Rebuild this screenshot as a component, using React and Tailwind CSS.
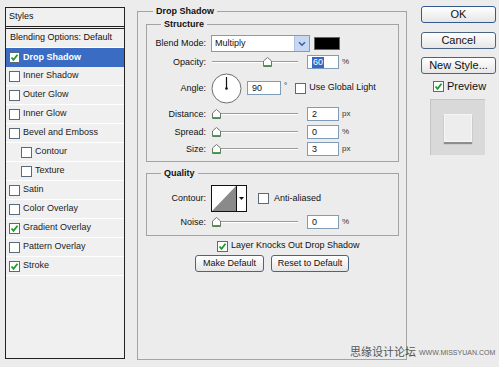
import React from 'react';

const font = { fontFamily: '"Liberation Sans", Arial, sans-serif' };

const Check = ({ checked }) => (
  <span className="w-[11px] h-[11px] border border-[#5a6a7a] bg-white flex items-center justify-center shrink-0">
    {checked && (
      <svg width="9" height="9" viewBox="0 0 9 9">
        <path d="M1.5 4.5 L3.5 6.8 L7.5 1.8" fill="none" stroke="#1f9a2a" strokeWidth="1.8" />
      </svg>
    )}
  </span>
);

const Thumb = () => (
  <svg width="9" height="10" viewBox="0 0 9 10">
    <path d="M0.5 4 L4.5 0.5 L8.5 4 V9.5 H0.5 Z" fill="#fff" stroke="#6b7a6b" />
    <path d="M1 8.8 H8" stroke="#2e9a3a" strokeWidth="1.4" />
  </svg>
);

const Slider = ({ pos }) => (
  <div className="relative w-[86px] h-[14px] flex items-center">
    <div className="w-full h-[2px] border-t border-[#9a9a9a] border-b border-b-white" />
    <div className="absolute top-[2px]" style={{ left: pos }}>
      <Thumb />
    </div>
  </div>
);

const Field = ({ value, selected, w = 'w-[32px]' }) => (
  <div className={`${w} h-[14px] bg-white border border-[#7f9db9] flex items-center pl-[4px] text-[9px] leading-none`}>
    {selected ? <span className="bg-[#316ac5] text-white px-[1px] py-[1px]">{value}</span> : value}
  </div>
);

const Label = ({ children }) => (
  <div className="w-[60px] text-right text-[9px] leading-none pr-[1px] whitespace-nowrap">{children}</div>
);

const SliderRow = ({ label, pos, value, unit, selected, className = '' }) => (
  <div className={`flex items-center h-[14px] ${className}`}>
    <Label>{label}</Label>
    <div className="ml-[5px]">
      <Slider pos={pos} />
    </div>
    <div className="ml-[9px]">
      <Field value={value} selected={selected} />
    </div>
    <span className="ml-[3px] text-[8px] text-[#333]">{unit}</span>
  </div>
);

const Btn = ({ children, className = '' }) => (
  <div
    className={`h-[17px] rounded-[3px] border border-[#4a6584] bg-gradient-to-b from-white to-[#e6e6e6] flex items-center justify-center leading-none text-[#111] whitespace-nowrap ${className}`}
  >
    {children}
  </div>
);

const styleRows = [
  { label: 'Inner Shadow' },
  { label: 'Outer Glow' },
  { label: 'Inner Glow' },
  { label: 'Bevel and Emboss' },
  { label: 'Contour', indent: true },
  { label: 'Texture', indent: true },
  { label: 'Satin' },
  { label: 'Color Overlay' },
  { label: 'Gradient Overlay', checked: true },
  { label: 'Pattern Overlay' },
  { label: 'Stroke', checked: true },
];

export default function App() {
  return (
    <div className="relative w-[499px] h-[367px] bg-[#ececec] text-[#111] flex overflow-hidden" style={font}>
      {/* layer styles list */}
      <div className="ml-[5px] mt-[7px] w-[120px] h-[352px] border border-[#222] bg-[#f0f0f0] flex flex-col">
        <div className="h-[21px] border-b-[3px] border-double border-[#222] flex items-center pl-[3px] text-[9px]">Styles</div>
        <div className="h-[19px] border-b border-white flex items-center pl-[4px] text-[9px]">Blending Options: Default</div>
        <div className="h-[19px] bg-[#3a6cc4] flex items-center pl-[3px] gap-[3px] text-[9px] font-bold text-white">
          <Check checked />
          Drop Shadow
        </div>
        {styleRows.map((r) => (
          <div
            key={r.label}
            className={`h-[19px] border-b border-white flex items-center gap-[3px] text-[9px] text-[#222] ${r.indent ? 'pl-[15px]' : 'pl-[3px]'}`}
          >
            <Check checked={r.checked} />
            {r.label}
          </div>
        ))}
      </div>

      {/* drop shadow settings */}
      <fieldset className="ml-[12px] mt-[5px] w-[270px] h-[355px] border border-[#a3a3a3]">
        <legend className="ml-[15px] px-[3px] text-[9px] leading-[12px] font-bold">Drop Shadow</legend>

        <fieldset className="ml-[8px] mt-[1px] w-[253px] border border-[#a3a3a3] pb-[5px]">
          <legend className="ml-[14px] px-[3px] text-[9px] leading-[12px] font-bold">Structure</legend>

          <div className="mt-[5px] flex items-center h-[17px]">
            <Label>Blend Mode:</Label>
            <div className="ml-[4px] w-[99px] h-[17px] bg-white border border-[#7f9db9] flex items-center">
              <span className="flex-1 pl-[3px] text-[9px]">Multiply</span>
              <div className="w-[15px] h-[15px] bg-[#c8d8f2] border-l border-[#b0c4e4] flex items-center justify-center">
                <svg width="8" height="6" viewBox="0 0 8 6">
                  <path d="M1 1.2 L4 4.2 L7 1.2" fill="none" stroke="#3d5f9e" strokeWidth="1.6" />
                </svg>
              </div>
            </div>
            <div className="ml-[4px] w-[26px] h-[13px] bg-black border border-[#666]" />
          </div>

          <SliderRow label="Opacity:" pos={51} value="60" unit="%" selected className="mt-[3px]" />

          <div className="mt-[4px] flex items-center h-[30px]">
            <Label>Angle:</Label>
            <svg className="ml-[4px]" width="31" height="31" viewBox="0 0 31 31">
              <circle cx="15.5" cy="15.5" r="14.5" fill="#fff" stroke="#6e6e6e" />
              <path d="M15.5 15.5 V4" stroke="#111" strokeWidth="1.2" />
              <circle cx="15.5" cy="15.5" r="1.3" fill="#111" />
            </svg>
            <div className="ml-[5px]">
              <Field value="90" w="w-[34px]" />
            </div>
            <span className="ml-[3px] text-[8px] self-start mt-[7px]">°</span>
            <div className="ml-[8px] flex items-center gap-[3px] text-[9px]">
              <Check />
              Use Global Light
            </div>
          </div>

          <SliderRow label="Distance:" pos={0} value="2" unit="px" className="mt-[4px]" />
          <SliderRow label="Spread:" pos={0} value="0" unit="%" className="mt-[4px]" />
          <SliderRow label="Size:" pos={0} value="3" unit="px" className="mt-[3px]" />
        </fieldset>

        <fieldset className="ml-[8px] mt-[5px] w-[253px] border border-[#a3a3a3] pb-[6px]">
          <legend className="ml-[14px] px-[3px] text-[9px] leading-[12px] font-bold">Quality</legend>

          <div className="mt-[6px] flex items-center h-[27px]">
            <Label>Contour:</Label>
            <div className="ml-[4px] w-[36px] h-[27px] border border-[#111] bg-white flex">
              <svg width="24" height="25" viewBox="0 0 24 25">
                <path d="M0 25 L24 0 V25 Z" fill="#8a8a8a" />
              </svg>
              <div className="flex-1 border-l border-[#111] flex items-center justify-center">
                <svg width="5" height="3" viewBox="0 0 5 3">
                  <path d="M0 0 H5 L2.5 3 Z" fill="#111" />
                </svg>
              </div>
            </div>
            <div className="ml-[11px] flex items-center gap-[5px] text-[9px]">
              <Check />
              Anti-aliased
            </div>
          </div>

          <SliderRow label="Noise:" pos={0} value="0" unit="%" className="mt-[3px]" />
        </fieldset>

        <div className="mt-[4px] pl-[79px] flex items-center gap-[3px] text-[9px] h-[12px]">
          <Check checked />
          Layer Knocks Out Drop Shadow
        </div>

        <div className="mt-[3px] pl-[57px] flex gap-[7px]">
          <Btn className="w-[69px] text-[9px]">Make Default</Btn>
          <Btn className="w-[78px] text-[9px]">Reset to Default</Btn>
        </div>
      </fieldset>

      {/* dialog buttons */}
      <div className="ml-[14px] mt-[6px] w-[75px] flex flex-col">
        <Btn className="h-[16px] border-[#34598f] text-[11px]">OK</Btn>
        <Btn className="mt-[9px] h-[16px] text-[11px]">Cancel</Btn>
        <Btn className="mt-[8px] h-[16px] text-[11px]">New Style...</Btn>
        <div className="mt-[7px] pl-[12px] flex items-center gap-[3px] text-[11px] h-[11px]">
          <Check checked />
          Preview
        </div>
        <div className="mt-[7px] ml-[9px] w-[55px] h-[56px] bg-[#d9d9d9] border-l border-t border-[#c4c4c4] flex items-center justify-center">
          <div className="w-[28px] h-[28px] bg-[#ededed] border border-[#f6f6f6] shadow-[0_2px_1px_rgba(0,0,0,0.35)]" />
        </div>
      </div>

      {/* watermark */}
      <div className="absolute left-[350px] top-[346px] flex items-end gap-[3px] whitespace-nowrap">
        <span className="text-[11px] leading-none text-[#555]" style={{ fontFamily: '"Noto Sans CJK SC", sans-serif' }}>思缘设计论坛</span>
        <span className="text-[7px] leading-none text-[#666] mb-[1px]">WWW.MISSYUAN.COM</span>
      </div>
    </div>
  );
}
